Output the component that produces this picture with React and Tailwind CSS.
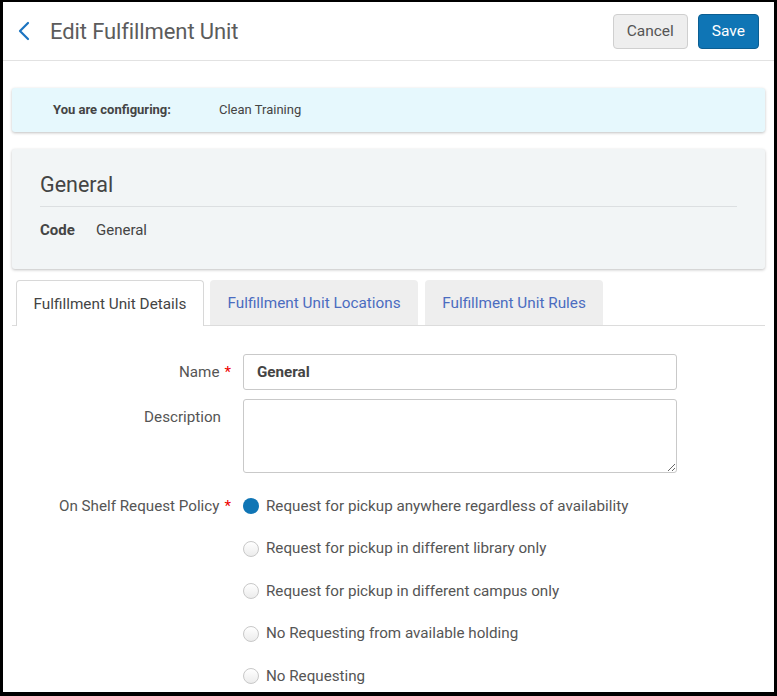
import React from 'react';

const options = [
  'Request for pickup anywhere regardless of availability',
  'Request for pickup in different library only',
  'Request for pickup in different campus only',
  'No Requesting from available holding',
  'No Requesting',
];

function Radio({ checked }) {
  return checked ? (
    <span className="w-4 h-4 rounded-full bg-[#0f75b5] shrink-0" />
  ) : (
    <span className="w-4 h-4 rounded-full border border-[#c8c8c8] bg-gradient-to-b from-white to-[#ececec] shrink-0" />
  );
}

export default function App() {
  return (
    <div className="h-[696px] overflow-hidden bg-white border-black border-l-[3px] border-r-[3px] border-t-2 border-b-4 font-['Roboto',sans-serif] text-[#444]">
      {/* Header */}
      <header className="h-[59px] border-b border-[#e2e2e2] flex items-center justify-between pl-[13px] pr-[15px]">
        <div className="flex items-center gap-[16px]">
          <svg width="18" height="20" viewBox="0 0 18 20" fill="none">
            <path d="M12 2 L4 10 L12 18" stroke="#1a73c0" strokeWidth="2.2" strokeLinecap="round" strokeLinejoin="round" />
          </svg>
          <h1 className="text-[22px] text-[#5c5c5c] tracking-[-0.1px]">Edit Fulfillment Unit</h1>
        </div>
        <div className="flex items-center gap-[10px] mt-[1px]">
          <button className="h-[35px] px-[13px] rounded-[4px] border border-[#cfcfcf] bg-[#eeeeee] text-[15.5px] text-[#555]">Cancel</button>
          <button className="h-[35px] px-[13px] rounded-[4px] border border-[#0b5e92] bg-[#0f75b5] text-[15.5px] text-white">Save</button>
        </div>
      </header>

      {/* Configuring banner */}
      <div className="mx-[9px] mt-[27px] h-[44px] rounded-[3px] bg-[#e6f8fd] shadow-[0_1px_3px_rgba(0,0,0,0.25)] flex items-center text-[13px]">
        <span className="ml-[41px] w-[166px] font-bold text-[#444]">You are configuring:</span>
        <span className="text-[#444]">Clean Training</span>
      </div>

      {/* General card */}
      <div className="mx-[9px] mt-[17px] h-[120px] rounded-[3px] bg-[#f2f5f6] shadow-[0_1px_3px_rgba(0,0,0,0.25)] px-[28px] pt-[23px]">
        <h2 className="text-[21.5px] text-[#444] leading-[26px] pb-[8px] border-b border-[#dcdfe1]">General</h2>
        <div className="flex items-center mt-[12px] text-[15px] text-[#444]">
          <span className="font-bold w-[56px]">Code</span>
          <span>General</span>
        </div>
      </div>

      {/* Tabs */}
      <div className="mx-[9px] mt-[11px] flex items-end gap-[6px] border-b border-[#dcdcdc] h-[46px]">
        <div className="ml-[4px] h-[46px] w-[188px] -mb-px pt-[1px] flex items-center justify-center rounded-t-[4px] border border-b-0 border-[#d8d8d8] bg-white text-[15.3px] text-[#444]">
          Fulfillment Unit Details
        </div>
        <div className="h-[45px] w-[208px] pt-[1px] flex items-center justify-center rounded-t-[4px] bg-[#eeeeee] text-[15.3px] text-[#4b6cc0]">
          Fulfillment Unit Locations
        </div>
        <div className="h-[45px] w-[178px] ml-px pt-[1px] flex items-center justify-center rounded-t-[4px] bg-[#eeeeee] text-[15.3px] text-[#4b6cc0]">
          Fulfillment Unit Rules
        </div>
      </div>

      {/* Form */}
      <div className="mt-[28px] text-[15.2px]">
        <div className="flex items-center">
          <div className="w-[228px] flex justify-end text-[#555]">
            Name<span className="ml-[5px] text-[#e00]">*</span>
          </div>
          <input
            readOnly
            value="General"
            className="ml-[12px] w-[434px] h-[36px] rounded-[3px] border border-[#c9c9c9] px-[13px] font-bold text-[#444] outline-none"
          />
        </div>
        <div className="flex mt-[9px]">
          <div className="w-[218px] text-right text-[#555] pt-[7px]">Description</div>
          <textarea
            readOnly
            className="ml-[22px] w-[434px] h-[74px] rounded-[3px] border border-[#c9c9c9] outline-none resize-y"
          />
        </div>
        <div className="flex mt-[23px]">
          <div className="w-[228px] flex justify-end text-[#555] h-[20px] items-center">
            On Shelf Request Policy<span className="ml-[5px] text-[#e00]">*</span>
          </div>
          <div className="ml-[12px] flex flex-col gap-[22.5px]">
            {options.map((o, i) => (
              <label key={o} className="flex items-center gap-[7px] h-[20px] text-[#555]">
                <Radio checked={i === 0} />
                {o}
              </label>
            ))}
          </div>
        </div>
      </div>
    </div>
  );
}
